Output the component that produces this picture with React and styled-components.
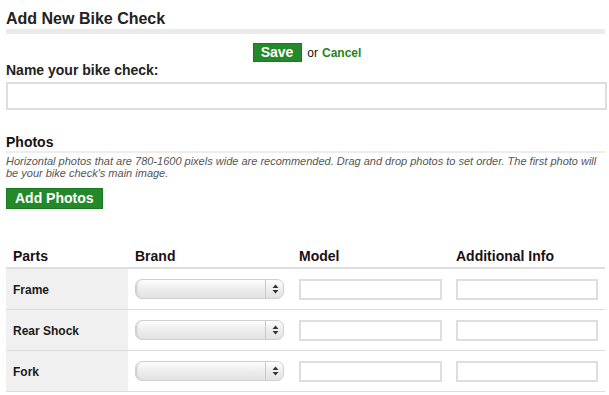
import React from "react";
import styled, { createGlobalStyle } from "styled-components";

const GlobalStyle = createGlobalStyle`
  body {
    margin: 0;
    background: #fff;
    font-family: "Liberation Sans", Arial, Helvetica, sans-serif;
    color: #222;
  }
`;

const parts = ["Frame", "Rear Shock", "Fork"];

const App = () => (
  <>
    <GlobalStyle />
    <Page>
      <Title>Add New Bike Check</Title>
      <Actions>
        <GreenButton>Save</GreenButton>
        <Or>or</Or>
        <CancelLink href="#">Cancel</CancelLink>
      </Actions>
      <Label>Name your bike check:</Label>
      <NameInput type="text" />

      <SectionTitle>Photos</SectionTitle>
      <Hint>
        Horizontal photos that are 780-1600 pixels wide are recommended. Drag and drop photos to set
        order. The first photo will be your bike check's main image.
      </Hint>
      <GreenButton wide>Add Photos</GreenButton>

      <Table>
        <HeadCell>Parts</HeadCell>
        <HeadCell>Brand</HeadCell>
        <HeadCell>Model</HeadCell>
        <HeadCell>Additional Info</HeadCell>
        {parts.map(part => (
          <React.Fragment key={part}>
            <PartCell>{part}</PartCell>
            <Cell>
              <SelectWrap>
                <Select defaultValue="">
                  <option value=""></option>
                </Select>
                <Arrows>
                  <svg width="7" height="10" viewBox="0 0 7 10">
                    <path d="M3.5 0.5 L6.5 4 L0.5 4 Z" fill="#333" />
                    <path d="M3.5 9.5 L6.5 6 L0.5 6 Z" fill="#333" />
                  </svg>
                </Arrows>
              </SelectWrap>
            </Cell>
            <Cell>
              <TextBox type="text" size={143} />
            </Cell>
            <Cell>
              <TextBox type="text" size={142} />
            </Cell>
          </React.Fragment>
        ))}
      </Table>
    </Page>
  </>
);

const Page = styled.div`
  padding: 9px 2px 0 6px;
  width: 601px;
  display: flex;
  flex-direction: column;
  align-items: flex-start;
`;

const Title = styled.h2`
  margin: 0;
  width: 599px;
  font-size: 16px;
  font-weight: bold;
  color: #222;
  line-height: 19px;
  padding-bottom: 1px;
  border-bottom: 5px solid #ebebec;
`;

const Actions = styled.div`
  width: 599px;
  margin-top: 9px;
  display: flex;
  justify-content: center;
  align-items: center;
  gap: 4px;
  padding-left: 3px;
  box-sizing: border-box;
`;

const GreenButton = styled.button`
  font-family: "Liberation Sans", Arial, sans-serif;
  font-weight: bold;
  font-size: 14px;
  color: #fff;
  background: #24892a;
  border: 1px solid #1a7a1f;
  border-radius: 0;
  height: ${props => (props.wide ? "21px" : "19px")};
  padding: ${props => (props.wide ? "0 8px" : "0 8px 0 7px")};
  line-height: 17px;
  margin: ${props => (props.wide ? "9px 0 0" : "0")};
  cursor: pointer;
`;

const Or = styled.span`
  font-size: 12px;
  color: #111;
  margin-left: 1px;
`;

const CancelLink = styled.a`
  font-size: 12px;
  font-weight: bold;
  color: #1f8524;
  text-decoration: none;
`;

const Label = styled.div`
  font-size: 14px;
  font-weight: bold;
  color: #222;
  margin-top: 0;
  line-height: 16px;
`;

const NameInput = styled.input`
  box-sizing: border-box;
  margin: 4px 0 0;
  width: 601px;
  height: 28px;
  border: 2px solid #dedede;
  border-radius: 0;
  outline: none;
`;

const SectionTitle = styled.div`
  width: 599px;
  margin-top: 24px;
  font-size: 14px;
  font-weight: bold;
  color: #1a1014;
  line-height: 16px;
  padding-bottom: 1px;
  border-bottom: 2px solid #ededed;
`;

const Hint = styled.p`
  margin: 2px 0 0;
  width: 599px;
  font-size: 11px;
  font-style: italic;
  color: #555;
  line-height: 12px;
`;

const Table = styled.div`
  margin-top: 39px;
  width: 599px;
  display: grid;
  grid-template-columns: 122px 164px 157px 156px;
`;

const HeadCell = styled.div`
  font-size: 14px;
  font-weight: bold;
  color: #1a1014;
  padding: 0 7px 3px;
  line-height: 16px;
  border-bottom: 2px solid #dedede;
`;

const Cell = styled.div`
  height: 40px;
  padding: 0 7px;
  display: flex;
  align-items: center;
  border-bottom: 1px solid #dcdcdc;
`;

const PartCell = styled(Cell)`
  background: #f0f0f0;
  font-size: 12px;
  font-weight: bold;
  color: #1a1a1a;
  padding-top: 1px;
  box-sizing: border-box;
  height: 41px;
`;

const SelectWrap = styled.div`
  position: relative;
  width: 149px;
  height: 20px;
`;

const Select = styled.select`
  appearance: none;
  -webkit-appearance: none;
  box-sizing: border-box;
  width: 149px;
  height: 20px;
  border: 1px solid #cfcfcf;
  border-radius: 7px;
  background: linear-gradient(#fdfdfd, #ececec 55%, #e3e3e3);
  box-shadow: inset 3px 0 2px -2px #c8c8c8;
  outline: none;
`;

const Arrows = styled.span`
  position: absolute;
  right: 0;
  top: 1px;
  bottom: 1px;
  width: 18px;
  border-left: 1px solid #c8c8c8;
  display: flex;
  align-items: center;
  justify-content: center;
  pointer-events: none;
`;

const TextBox = styled.input`
  box-sizing: border-box;
  width: ${props => props.size}px;
  height: 21px;
  margin: 0;
  border: 2px solid #dedede;
  border-radius: 0;
  outline: none;
`;

export default App;
